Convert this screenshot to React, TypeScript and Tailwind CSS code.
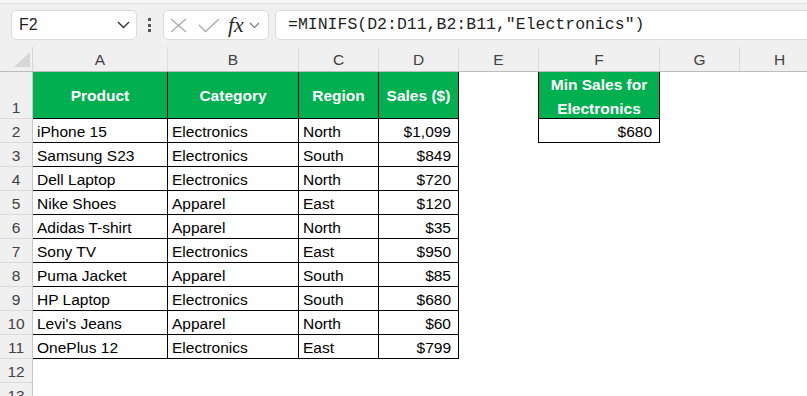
import React from "react";

const COLS = [
  { letter: "A", w: "w-[135px]" },
  { letter: "B", w: "w-[131px]" },
  { letter: "C", w: "w-[80px]" },
  { letter: "D", w: "w-[80px]" },
  { letter: "E", w: "w-[80px]" },
  { letter: "F", w: "w-[121px]" },
  { letter: "G", w: "w-[80px]" },
  { letter: "H", w: "w-[80px]" },
];

const DATA = [
  ["iPhone 15", "Electronics", "North", "$1,099"],
  ["Samsung S23", "Electronics", "South", "$849"],
  ["Dell Laptop", "Electronics", "North", "$720"],
  ["Nike Shoes", "Apparel", "East", "$120"],
  ["Adidas T-shirt", "Apparel", "North", "$35"],
  ["Sony TV", "Electronics", "East", "$950"],
  ["Puma Jacket", "Apparel", "South", "$85"],
  ["HP Laptop", "Electronics", "South", "$680"],
  ["Levi's Jeans", "Apparel", "North", "$60"],
  ["OnePlus 12", "Electronics", "East", "$799"],
];

const HEADERS = ["Product", "Category", "Region", "Sales ($)"];

function RowHead({ n, tall }: { n: number; tall?: boolean }) {
  return (
    <div
      className={`flex w-[33px] shrink-0 items-end justify-center border-r border-b border-r-[#c6c6c6] border-b-[#dadada] bg-[#f0f0f0] text-[15.5px] leading-[21px] text-[#424242] ${
        tall ? "h-[47px]" : "h-[24px]"
      }`}
    >
      {n}
    </div>
  );
}

function Toolbar() {
  return (
    <div className="flex h-[43px] items-start bg-[#f0f0f0] pt-[6px] pl-[11px]">
      {/* Name box */}
      <div className="flex h-[30px] w-[126px] items-center justify-between rounded-[5px] border border-[#dcdcdc] bg-white pl-[7px] pr-[6px]">
        <span className="text-[16px] text-[#1f1f1f]">F2</span>
        <svg width="13" height="8" viewBox="0 0 13 8">
          <polyline points="1,1 6.5,6.5 12,1" fill="none" stroke="#333" strokeWidth="1.4" />
        </svg>
      </div>

      {/* Dots */}
      <div className="ml-[11px] mt-[8px] flex w-[3px] flex-col gap-[2.5px]">
        <div className="h-[3px] w-[3px] bg-[#555]" />
        <div className="h-[3px] w-[3px] bg-[#555]" />
        <div className="h-[3px] w-[3px] bg-[#555]" />
      </div>

      {/* Cancel / enter / fx */}
      <div className="ml-[12px] flex h-[30px] w-[106px] items-center rounded-[5px] border border-[#dcdcdc] bg-white pl-[6px]">
        <svg width="17" height="15" viewBox="0 0 17 15">
          <line x1="1" y1="1" x2="16" y2="14" stroke="#ababab" strokeWidth="1.3" />
          <line x1="16" y1="1" x2="1" y2="14" stroke="#ababab" strokeWidth="1.3" />
        </svg>
        <svg className="ml-[11px]" width="22" height="15" viewBox="0 0 22 15">
          <polyline points="1,7 7.5,13.5 21,1" fill="none" stroke="#ababab" strokeWidth="1.3" />
        </svg>
        <span className="ml-[8px] font-['Liberation_Serif',serif] text-[22px] italic leading-none text-[#2b2b2b]">
          fx
        </span>
        <svg className="ml-[5px]" width="11" height="7" viewBox="0 0 11 7">
          <polyline points="1,1 5.5,5.5 10,1" fill="none" stroke="#777" strokeWidth="1.1" />
        </svg>
      </div>

      {/* Formula */}
      <div className="ml-[6px] mr-[-12px] flex h-[30px] flex-1 items-center rounded-[5px] border border-[#dcdcdc] bg-white pl-[12px]">
        <span className="font-['Liberation_Mono',monospace] text-[16.5px] text-[#1f1f1f]">
          =MINIFS(D2:D11,B2:B11,"Electronics")
        </span>
      </div>
    </div>
  );
}

export default function App() {
  return (
    <div className="h-[396px] w-[807px] overflow-hidden bg-white font-['Liberation_Sans',sans-serif]">
      <div className="h-[4px] border-b border-[#dedede] bg-[#f7f7f7] shadow-[0_1px_2px_rgba(0,0,0,0.12)]" />
      <Toolbar />

      {/* Column headers */}
      <div className="flex h-[25px] border-b border-[#bdbdbd] bg-[#f0f0f0]">
        <div className="relative w-[33px] shrink-0 border-r border-[#d6d6d6]">
          <svg className="absolute left-[14px] top-[5px]" width="16" height="15" viewBox="0 0 16 15">
            <polygon points="16,0 16,15 0,15" fill="#d6d6d6" />
          </svg>
        </div>
        {COLS.map((c) => (
          <div
            key={c.letter}
            className={`${c.w} flex shrink-0 items-center justify-center border-r border-[#dadada] pt-[2px] text-[15.5px] text-[#424242]`}
          >
            {c.letter}
          </div>
        ))}
      </div>

      {/* Row 1: headers */}
      <div className="flex">
        <RowHead n={1} tall />
        {HEADERS.map((h, i) => (
          <div
            key={h}
            className={`${COLS[i].w} flex h-[47px] shrink-0 items-center justify-center border-r border-b border-black bg-[#00b050] pt-[2px] text-[15.5px] font-bold text-white`}
          >
            {h}
          </div>
        ))}
        <div className="h-[47px] w-[80px] shrink-0 border-r border-black" />
        <div className="flex h-[47px] w-[121px] shrink-0 items-center justify-center border-r border-b border-black bg-[#00b050] pt-[3px] text-center text-[15.5px] font-bold leading-[24px] text-white">
          Min Sales for
          <br />
          Electronics
        </div>
      </div>

      {/* Data rows */}
      {DATA.map((r, ri) => (
        <div key={ri} className="flex">
          <RowHead n={ri + 2} />
          {r.map((v, ci) => (
            <div
              key={ci}
              className={`${COLS[ci].w} flex h-[24px] shrink-0 items-end border-r border-b border-black px-[4px] text-[15.5px] leading-[21px] text-black ${
                ci === 3 ? "justify-end pr-[7px]" : "justify-start"
              }`}
            >
              {v}
            </div>
          ))}
          {ri === 0 && (
            <>
              <div className="h-[24px] w-[80px] shrink-0 border-r border-black" />
              <div className="flex h-[24px] w-[121px] shrink-0 items-end justify-end border-r border-b border-black pr-[7px] text-[15.5px] leading-[21px] text-black">
                $680
              </div>
            </>
          )}
        </div>
      ))}

      <div className="flex">
        <RowHead n={12} />
      </div>
      <div className="flex">
        <RowHead n={13} />
      </div>
    </div>
  );
}
